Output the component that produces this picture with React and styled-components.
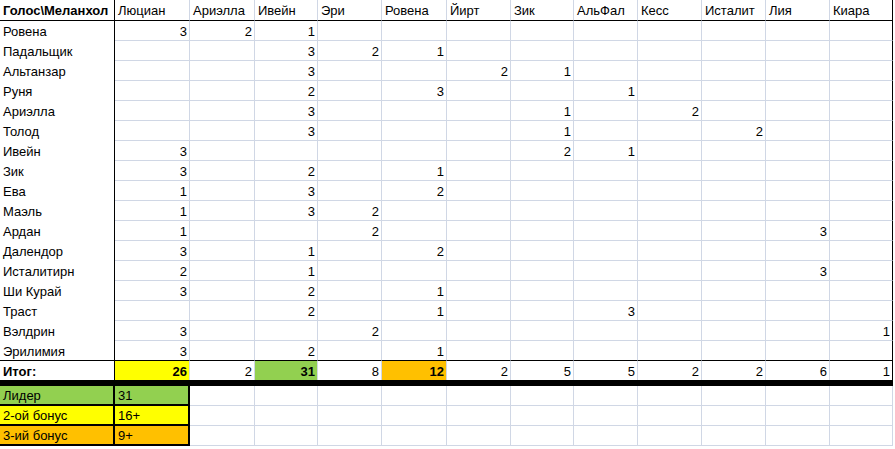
import React from "react";
import styled, { createGlobalStyle } from "styled-components";

const GRID = "#d0d7e5";
const FILLS = { yellow: "#ffff00", green: "#92d050", orange: "#ffc000" };

const columns = [
  "Люциан",
  "Ариэлла",
  "Ивейн",
  "Эри",
  "Ровена",
  "Йирт",
  "Зик",
  "АльФал",
  "Кесс",
  "Исталит",
  "Лия",
  "Киара",
];
const widths = [115, 75, 65, 63, 64, 65, 64, 63, 64, 64, 64, 64, 63];
const template = widths.map((w) => w + "px").join(" ");

// голоса: индекс колонки -> балл
const votes = [
  ["Ровена", { 0: 3, 1: 2, 2: 1 }],
  ["Падальщик", { 2: 3, 3: 2, 4: 1 }],
  ["Альтанзар", { 2: 3, 5: 2, 6: 1 }],
  ["Руня", { 2: 2, 4: 3, 7: 1 }],
  ["Ариэлла", { 2: 3, 6: 1, 8: 2 }],
  ["Толод", { 2: 3, 6: 1, 9: 2 }],
  ["Ивейн", { 0: 3, 6: 2, 7: 1 }],
  ["Зик", { 0: 3, 2: 2, 4: 1 }],
  ["Ева", { 0: 1, 2: 3, 4: 2 }],
  ["Маэль", { 0: 1, 2: 3, 3: 2 }],
  ["Ардан", { 0: 1, 3: 2, 10: 3 }],
  ["Далендор", { 0: 3, 2: 1, 4: 2 }],
  ["Исталитирн", { 0: 2, 2: 1, 10: 3 }],
  ["Ши Курай", { 0: 3, 2: 2, 4: 1 }],
  ["Траст", { 2: 2, 4: 1, 7: 3 }],
  ["Вэлдрин", { 0: 3, 3: 2, 11: 1 }],
  ["Эрилимия", { 0: 3, 2: 2, 4: 1 }],
];

const highlight = { 0: "yellow", 2: "green", 4: "orange" };

const legend = [
  ["Лидер", "31", "green"],
  ["2-ой бонус", "16+", "yellow"],
  ["3-ий бонус", "9+", "orange"],
];

const GlobalStyle = createGlobalStyle`
  body {
    margin: 0;
    background: #fff;
    font-family: "Liberation Sans", Arial, sans-serif;
    font-size: 13px;
    color: #000;
  }
`;

const Sheet = styled.div`
  width: 893px;
  display: flex;
  flex-direction: column;
`;

const Row = styled.div`
  display: grid;
  grid-template-columns: ${template};
  height: ${(p) => (p.$kind === "head" ? 21 : p.$kind === "total" ? 25 : 20)}px;
  border-bottom: ${(p) => (p.$kind === "total" ? "6px solid #000" : "none")};
  box-sizing: border-box;
`;

const Cell = styled.div`
  box-sizing: border-box;
  overflow: hidden;
  white-space: nowrap;
  line-height: 19px;
  padding: 1px 2px 0 3px;
  text-align: ${(p) => (p.$num ? "right" : "left")};
  font-weight: ${(p) => (p.$bold ? 700 : 400)};
  background: ${(p) => (p.$fill ? FILLS[p.$fill] : "#fff")};
  border-right: 1px solid ${(p) => (p.$edge ? "#000" : GRID)};
  border-bottom: ${(p) =>
    p.$line === "none" ? "none" : `1px solid ${p.$line === "dark" ? "#000" : GRID}`};
`;

const LegendCell = styled.div`
  box-sizing: border-box;
  overflow: hidden;
  white-space: nowrap;
  line-height: 18px;
  padding: 1px 3px 0;
  background: ${(p) => FILLS[p.$fill]};
  border-right: 2px solid #000;
  border-bottom: 2px solid #000;
`;

const lastCol = columns.length - 1;

export default function App() {
  return (
    <>
      <GlobalStyle />
      <Sheet>
        <Row $kind="head">
          <Cell $bold $edge $line="dark">
            Голос\Меланхол
          </Cell>
          {columns.map((c, i) => (
            <Cell key={c} $line="dark" $edge={i === lastCol}>
              {c}
            </Cell>
          ))}
        </Row>

        {votes.map(([name, marks], r) => {
          const last = r === votes.length - 1;
          return (
            <Row key={name}>
              <Cell $edge $line={last ? "dark" : "none"}>
                {name}
              </Cell>
              {columns.map((c, i) => (
                <Cell key={c} $num $edge={i === lastCol} $line={last ? "dark" : "grid"}>
                  {marks[i] ?? ""}
                </Cell>
              ))}
            </Row>
          );
        })}

        <Row $kind="total">
          <Cell $bold $edge $line="none">
            Итог:
          </Cell>
          {columns.map((c, i) => {
            const sum = votes.reduce((s, [, m]) => s + (m[i] || 0), 0);
            return (
              <Cell
                key={c}
                $num
                $line="none"
                $edge={i === lastCol}
                $fill={highlight[i]}
                $bold={!!highlight[i]}
              >
                {sum}
              </Cell>
            );
          })}
        </Row>

        {legend.map(([label, value, fill]) => (
          <Row key={label}>
            <LegendCell $fill={fill}>{label}</LegendCell>
            <LegendCell $fill={fill}>{value}</LegendCell>
            {columns.slice(1).map((c) => (
              <Cell key={c} $line="grid" />
            ))}
          </Row>
        ))}
      </Sheet>
    </>
  );
}
